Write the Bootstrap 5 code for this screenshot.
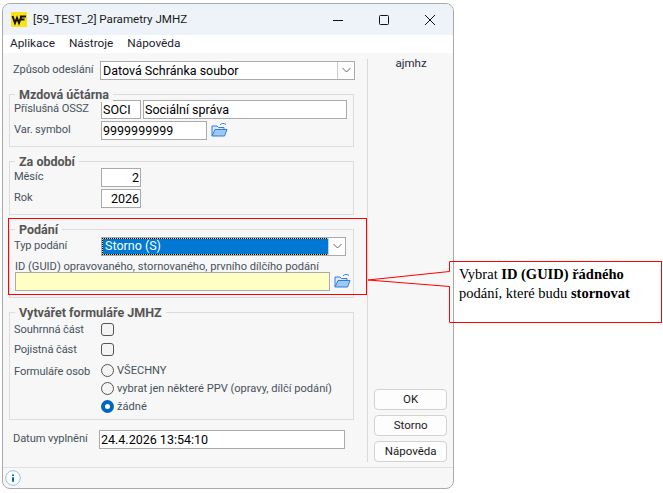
<!DOCTYPE html>
<html lang="cs">
<head>
<meta charset="utf-8">
<title>Parametry JMHZ</title>
<link rel="stylesheet" href="https://cdn.jsdelivr.net/npm/bootstrap@5.3.0/dist/css/bootstrap.min.css">
<style>
html,body{height:100%;margin:0;background:#fff;overflow:hidden}
body{font-family:Roboto,"Noto Sans",sans-serif;font-size:11.1px;line-height:15px;color:#46525c}
.win{position:absolute;left:2px;top:3px;width:452px;height:486px;border:1px solid #a9a9a9;border-radius:8px;background:#f7f7f7;overflow:hidden}
.tbar{height:31px;background:#eef3f9;color:#1a1a1a;font-size:11.6px;padding-left:8px}
.tt{margin-left:6px}
.wctl{width:46px;height:31px}
.mbar{height:18px;background:#fff;color:#1c2230;padding-left:7px;gap:14px;font-size:11.8px}
.mainp{height:416px;border-bottom:1px solid #e0e0e0}
.leftc{width:365px;padding:8px 0 0 6px}
.vline{width:1px;background:#d9d9d9;margin:6px 0 5px 0}
.rightc{width:85px;padding:0 5px 5px 6px}
.fset{position:relative;width:345px;border:1px solid #dcdcdc;padding:0 0 0 4px;margin:0}
.fleg{position:absolute;left:5px;top:-8px;float:none;width:auto;margin:0;padding:0 4px;background:#f7f7f7;font-size:12.5px;line-height:15px;font-weight:700;color:#555}
.fr{display:flex;align-items:flex-start}
.lb{width:87px;flex:none;white-space:nowrap;padding-top:1px;letter-spacing:-.1px}
.fld{height:19px;border:1px solid #aaa;border-radius:0;background:#fff;color:#000;font-size:12.5px;line-height:17px;padding:0 1px;box-shadow:none;min-height:0;outline:0}
.fld:focus{box-shadow:none;border-color:#aaa;background:#fff;color:#000}
.selw{display:flex;height:19px;border:1px solid #aaa;background:#fff;color:#000;font-size:12.5px;line-height:17px}
.selv{flex:1;padding-left:2px}
.seln{flex:1;margin:1px 0 1px 1px;padding-left:2px;background:#0078d4;color:#fff;line-height:14px;outline:1px dotted #000;outline-offset:0;box-shadow:0 0 0 1px #a8e0a8}
.selb{width:17px;flex:none;border-left:1px solid #ccc;display:flex;align-items:center;justify-content:center;background:#fdfdfd}
.guid{background:#ffffc4}
.guid:focus{background:#ffffc4}
.fold{width:17px;height:16px;flex:none}
.cb.form-check-input{width:13px;height:13px;margin:0;border:1px solid #555;border-radius:3px;background-color:#f4f4f4;box-shadow:none;float:none;flex:none}
.rd.form-check-input{width:13px;height:13px;margin:0 3px 0 0;border:1px solid #555;background-color:#f4f4f4;box-shadow:none;float:none;flex:none}
.rd.form-check-input:checked{background-color:#fff;border:4px solid #0067c0;background-image:none}
.rr{display:flex;align-items:center;height:18px;white-space:nowrap}
.aj{margin-top:2px;text-align:center;color:#1f2937;font-size:11.5px;line-height:16px}
.bt{display:block;width:73px;height:21px;padding:0;border:1px solid #d2d2d2;border-radius:4px;background:#fdfdfd;color:#1a1a1a;font-size:11.5px;line-height:19px;margin-top:5px}
.sbar{height:20px;padding-left:2px}
.rbox{position:absolute;left:8px;top:218px;width:359px;height:77px;border:1px solid #f00;pointer-events:none}
.wedge{position:absolute;left:360px;top:255px;width:100px;height:80px}
.callout{position:absolute;left:450px;top:261px;width:212px;height:62px;border:1px solid #f00;border-left:0;padding:3px 9px;font-family:"Liberation Serif",serif;font-size:14.5px;line-height:19px;color:#000}
</style>
</head>
<body>
<div class="win d-flex flex-column">
  <div class="tbar d-flex align-items-center">
    <svg width="16" height="15" viewBox="0 0 16 15"><rect width="16" height="15" fill="#fbe216"/><path d="M1.500 4 4 11 6 6 8 11 10.500 4M9 4.500h6M9.500 7.500h4" fill="none" stroke="#111" stroke-width="2"/></svg>
    <span class="tt">[59_TEST_2] Parametry JMHZ</span>
    <div class="ms-auto d-flex">
      <div class="wctl d-flex align-items-center justify-content-center"><svg width="12" height="12" viewBox="0 0 12 12"><path d="M1 6.500h10" stroke="#111" stroke-width="1"/></svg></div>
      <div class="wctl d-flex align-items-center justify-content-center"><svg width="12" height="12" viewBox="0 0 12 12"><rect x="1.500" y="1.500" width="9" height="9" rx="1" fill="none" stroke="#111"/></svg></div>
      <div class="wctl d-flex align-items-center justify-content-center"><svg width="12" height="12" viewBox="0 0 12 12"><path d="M1 1l10 10M11 1 1 11" stroke="#111"/></svg></div>
    </div>
  </div>
  <div class="mbar d-flex align-items-center"><span>Aplikace</span><span>Nástroje</span><span>Nápověda</span></div>
  <div class="mainp d-flex">
    <div class="leftc">
      <div class="fr"><span class="lb" style="padding-left:4px;width:91px">Způsob odeslání</span>
        <div class="selw" style="width:255px"><span class="selv">Datová Schránka soubor</span><span class="selb"><svg width="9" height="6" viewBox="0 0 9 6"><path d="M.5 1 4.500 5 8.500 1" fill="none" stroke="#666"/></svg></span></div>
      </div>
      <fieldset class="fset" style="margin-top:14px;height:53px;padding-top:5px">
        <legend class="fleg">Mzdová účtárna</legend>
        <div class="fr"><span class="lb">Příslušná OSSZ</span><input class="form-control fld" style="width:40px" value="SOCI" readonly><input class="form-control fld" style="width:204px;margin-left:2px" value="Sociální správa" readonly></div>
        <div class="fr" style="margin-top:2px"><span class="lb">Var. symbol</span><input class="form-control fld" style="width:106px" value="9999999999" readonly>
          <svg class="fold" style="margin:1px 0 0 4px" viewBox="0 0 17 16"><path d="M1 14V4h5l1.500 1.500H13V8" fill="#dbe9f8" stroke="#2f7fe0"/><path d="M1 14 4 7.500H16L13.500 14Z" fill="#a0c8f4" stroke="#2f7fe0"/><path d="M9 3C10.500 1 13 1 15 2.500" fill="none" stroke="#2f7fe0"/></svg>
        </div>
      </fieldset>
      <fieldset class="fset" style="margin-top:14px;height:54px;padding-top:6px">
        <legend class="fleg">Za období</legend>
        <div class="fr"><span class="lb">Měsíc</span><input class="form-control fld text-end" style="width:40px" value="2" readonly></div>
        <div class="fr" style="margin-top:2px"><span class="lb">Rok</span><input class="form-control fld text-end" style="width:40px" value="2026" readonly></div>
      </fieldset>
      <fieldset class="fset" style="margin-top:14px;height:69px;padding-top:7px">
        <legend class="fleg">Podání</legend>
        <div class="fr"><span class="lb">Typ podání</span>
          <div class="selw" style="width:245px"><span class="seln">Storno (S)</span><span class="selb"><svg width="9" height="6" viewBox="0 0 9 6"><path d="M.5 1 4.500 5 8.500 1" fill="none" stroke="#666"/></svg></span></div>
        </div>
        <div class="mt-1" style="padding-left:1px;line-height:13px;height:14px;white-space:nowrap">ID (GUID) opravovaného, stornovaného, prvního dílčího podání</div>
        <div class="fr" style="margin-top:-2px;padding-left:1px"><input class="form-control fld guid" style="width:315px" readonly>
          <svg class="fold" style="margin:1px 0 0 4px" viewBox="0 0 17 16"><path d="M1 14V4h5l1.500 1.500H13V8" fill="#dbe9f8" stroke="#2f7fe0"/><path d="M1 14 4 7.500H16L13.500 14Z" fill="#a0c8f4" stroke="#2f7fe0"/><path d="M9 3C10.500 1 13 1 15 2.500" fill="none" stroke="#2f7fe0"/></svg>
        </div>
      </fieldset>
      <fieldset class="fset" style="margin-top:14px;height:108px;padding-top:9px">
        <legend class="fleg">Vytvářet formuláře JMHZ</legend>
        <div class="fr align-items-center" style="height:15px"><span class="lb">Souhrnná část</span><input class="form-check-input cb" type="checkbox"></div>
        <div class="fr align-items-center" style="height:15px;margin-top:5px"><span class="lb">Pojistná část</span><input class="form-check-input cb" type="checkbox"></div>
        <div class="fr" style="margin-top:5px"><span class="lb" style="padding-top:2px">Formuláře osob</span>
          <div>
            <label class="rr"><input class="form-check-input rd" type="radio" name="fo">VŠECHNY</label>
            <label class="rr"><input class="form-check-input rd" type="radio" name="fo">vybrat jen některé PPV (opravy, dílčí podání)</label>
            <label class="rr"><input class="form-check-input rd" type="radio" name="fo" checked>žádné</label>
          </div>
        </div>
      </fieldset>
      <div class="fr" style="margin-top:10px"><span class="lb" style="padding-left:4px;width:90px">Datum vyplnění</span><input class="form-control fld" style="width:246px" value="24.4.2026 13:54:10" readonly></div>
    </div>
    <div class="vline"></div>
    <div class="rightc d-flex flex-column">
      <div class="aj">ajmhz</div>
      <div class="mt-auto">
        <button class="btn bt" type="button">OK</button>
        <button class="btn bt" type="button">Storno</button>
        <button class="btn bt" type="button">Nápověda</button>
      </div>
    </div>
  </div>
  <div class="sbar d-flex align-items-center">
    <svg width="16" height="16" viewBox="0 0 16 16"><circle cx="8" cy="8" r="7.300" fill="#fff" stroke="#8cc4f0"/><path d="M8 4.500v1.500M8 7.200v4.500" stroke="#0067c0" stroke-width="2"/></svg>
  </div>
</div>
<div class="rbox"></div>
<div class="callout"><div>Vybrat <b>ID (GUID) řádného</b></div><div>podání, které budu <b>stornovat</b></div></div>
<svg class="wedge" viewBox="0 0 100 80"><path d="M89.500 6.500V16.500L8 25 89.500 31.500V67.500" fill="none" stroke="#f00"/></svg>
</body>
</html>
